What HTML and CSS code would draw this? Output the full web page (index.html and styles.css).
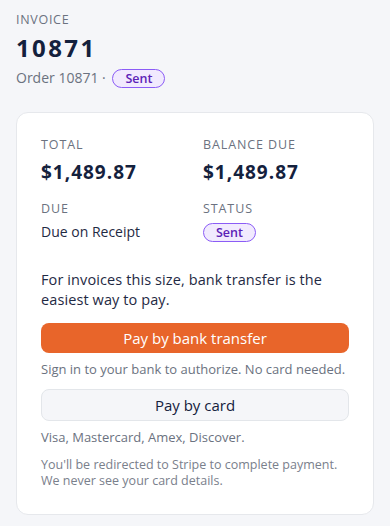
FILE: index.html
```html
<!DOCTYPE html>
<html lang="en">
<head>
  <meta charset="UTF-8">
  <meta name="viewport" content="width=device-width, initial-scale=1.0">
  <title>Invoice 10871</title>
  <link rel="stylesheet" href="styles.css">
</head>
<body>

  <header class="head">
    <div class="eyebrow">INVOICE</div>
    <h1 class="number">10871</h1>
    <div class="order">Order 10871 · <span class="badge">Sent</span></div>
  </header>

  <section class="card">
    <div class="facts">
      <div class="fact">
        <div class="label">TOTAL</div>
        <div class="amount">$1,489.87</div>
      </div>
      <div class="fact">
        <div class="label">BALANCE DUE</div>
        <div class="amount">$1,489.87</div>
      </div>
      <div class="fact">
        <div class="label">DUE</div>
        <div class="value">Due on Receipt</div>
      </div>
      <div class="fact">
        <div class="label">STATUS</div>
        <div class="value"><span class="badge">Sent</span></div>
      </div>
    </div>

    <p class="hint">For invoices this size, bank transfer is the easiest way to pay.</p>

    <button class="btn btn-primary">Pay by bank transfer</button>
    <p class="note">Sign in to your bank to authorize. No card needed.</p>

    <button class="btn btn-secondary">Pay by card</button>
    <p class="note">Visa, Mastercard, Amex, Discover.</p>

    <p class="fine">You'll be redirected to Stripe to complete payment. We never see your card details.</p>
  </section>

</body>
</html>
```

FILE: styles.css
```css
body {
  font-family: "Open Sans", "Liberation Sans", sans-serif;
  background: #f5f6f9;
  color: #1b2440;
  margin: 0;
  padding: 12px 16px 10px;
}
.eyebrow {
  font-size: 12.5px;
  letter-spacing: 0.7px;
  color: #6b7280;
  line-height: 16px;
}
.number {
  font-size: 24px;
  font-weight: 700;
  letter-spacing: 2.4px;
  color: #14213d;
  margin: 6px 0 6px;
  line-height: 28px;
}
.order {
  font-size: 14px;
  color: #6b7280;
  line-height: 20px;
}
.order .badge {
  margin-left: 3px;
}
.badge {
  display: inline-block;
  font-size: 12.5px;
  font-weight: 600;
  color: #5b21b6;
  background: #f1eafe;
  border: 1px solid #8b5cf6;
  border-radius: 10px;
  padding: 0 12px;
  line-height: 17px;
}
.card {
  margin-top: 24px;
  background: #fff;
  border: 1px solid #e6e8ec;
  border-radius: 12px;
  padding: 24px 24px 25px;
}
.facts {
  display: grid;
  grid-template-columns: 1fr 1fr;
  column-gap: 16px;
  row-gap: 17px;
}
.label {
  font-size: 12.5px;
  color: #6b7280;
  letter-spacing: 0.9px;
  line-height: 16px;
}
.amount {
  font-size: 19px;
  font-weight: 700;
  letter-spacing: 1px;
  color: #14213d;
  margin-top: 7px;
  line-height: 24px;
}
.value {
  font-size: 14px;
  color: #1f2a44;
  margin-top: 5px;
  line-height: 20px;
}
.hint {
  font-size: 14.5px;
  line-height: 20px;
  letter-spacing: 0.1px;
  color: #1f2a44;
  margin: 28px 0 13px;
}
.btn {
  display: block;
  width: 100%;
  font-family: inherit;
  font-size: 15px;
  border-radius: 8px;
  cursor: pointer;
}
.btn-primary {
  background: #e8652a;
  color: #fff;
  border: none;
  height: 30px;
}
.btn-secondary {
  background: #f5f6f9;
  color: #14213d;
  border: 1px solid #e3e6ea;
  height: 32px;
  font-weight: 500;
}
.note {
  font-size: 13px;
  color: #6b7280;
  margin: 8px 0 12px;
  line-height: 16px;
}
.fine {
  font-size: 12.5px;
  color: #7a808c;
  line-height: 16px;
  margin: 12px 0 0;
}
```
